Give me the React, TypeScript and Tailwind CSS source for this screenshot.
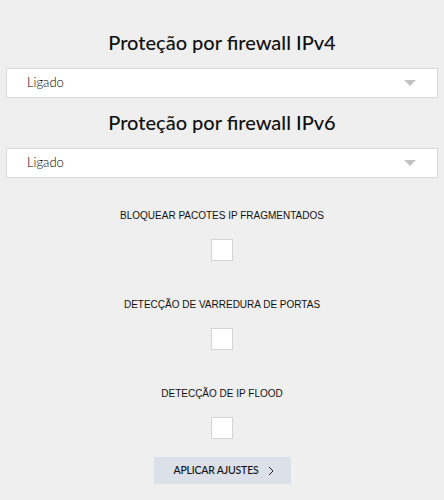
import { useState } from "react";

const Heading = ({ text }: { text: string }) => (
  <h2 className="h-[28px] text-center text-[20px] leading-[28px] font-medium text-[#111] font-['Lato',sans-serif]">
    {text}
  </h2>
);

const SelectBox = ({ value }: { value: string }) => (
  <div className="h-[30px] border border-[#d9d9d9] bg-white flex items-center justify-between pl-[20px] pr-[21px]">
    <span className="text-[13px] font-light text-black font-['Lato',sans-serif]">{value}</span>
    <svg width="12" height="6" viewBox="0 0 12 6">
      <polygon points="0,0 12,0 6,6" fill="#c2c2c2" />
    </svg>
  </div>
);

const CheckOption = ({ label }: { label: string }) => {
  const [checked, setChecked] = useState(false);
  return (
    <div className="flex flex-col items-center">
      <p className="h-[14px] leading-[14px] text-[10px] text-[#111] font-['Liberation_Sans',Arial,sans-serif]">
        {label}
      </p>
      <button
        onClick={() => setChecked(!checked)}
        className="mt-[16px] w-[22px] h-[22px] bg-white border border-[#d4d4d4] flex items-center justify-center text-[12px]"
      >
        {checked ? "✓" : ""}
      </button>
    </div>
  );
};

export default function App() {
  return (
    <div className="min-h-[500px] bg-[#efefef] px-[6px] pt-[28px] pb-[16px]">
      <Heading text="Proteção por firewall IPv4" />
      <div className="mt-[12px]">
        <SelectBox value="Ligado" />
      </div>
      <div className="mt-[10px]">
        <Heading text="Proteção por firewall IPv6" />
      </div>
      <div className="mt-[12px]">
        <SelectBox value="Ligado" />
      </div>

      <div className="mt-[31px] flex flex-col gap-[37px]">
        <CheckOption label="BLOQUEAR PACOTES IP FRAGMENTADOS" />
        <CheckOption label="DETECÇÃO DE VARREDURA DE PORTAS" />
        <CheckOption label="DETECÇÃO DE IP FLOOD" />
      </div>

      <div className="mt-[18px] flex justify-center">
        <button className="w-[137px] h-[27px] bg-[#dce0e9] flex items-center justify-center gap-[9px] pl-[3px] text-[10.5px] font-medium tracking-[-0.2px] text-[#111] font-['Lato',sans-serif]">
          <span>APLICAR AJUSTES</span>
          <svg width="6" height="10" viewBox="0 0 6 10">
            <polyline points="1,1 5,5 1,9" fill="none" stroke="#222" strokeWidth="1" />
          </svg>
        </button>
      </div>
    </div>
  );
}
